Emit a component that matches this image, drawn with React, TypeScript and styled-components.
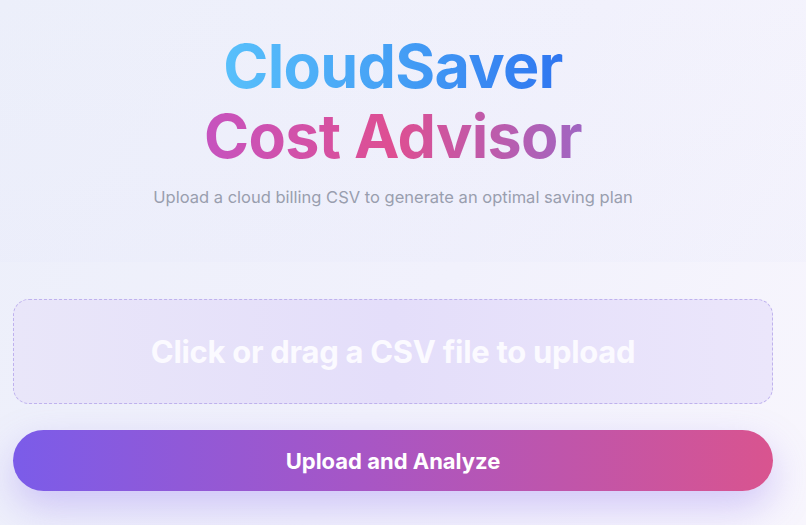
import React from "react";
import styled, { createGlobalStyle } from "styled-components";

const GlobalStyle = createGlobalStyle`
  html, body {
    margin: 0;
    padding: 0;
  }
  body {
    min-height: 525px;
    font-family: "Inter", "Noto Sans", sans-serif;
    background: linear-gradient(120deg, #eceffa 0%, #f1f1fc 55%, #f8f6fd 100%);
    -webkit-font-smoothing: antialiased;
  }
`;

const Page = styled.main`
  box-sizing: border-box;
  width: 806px;
  height: 525px;
  overflow: hidden;
  padding: 0 33px 0 13px;
  display: flex;
  flex-direction: column;
`;

const Header = styled.header`
  display: flex;
  flex-direction: column;
  align-items: center;
  padding: 31px 33px 0 13px;
  height: 262px;
  box-sizing: border-box;
  margin: 0 -33px 0 -13px;
  background: linear-gradient(180deg, rgba(255, 255, 255, 0) 0%, rgba(228, 230, 250, 0.18) 100%);
`;

const Title = styled.h1`
  margin: 0;
  font-size: 61px;
  line-height: 70px;
  font-weight: 700;
  letter-spacing: -0.7px;
  text-align: center;
  display: flex;
  flex-direction: column;
  align-items: center;
`;

const TitleLine = styled.span<{ $from: string; $mid: string; $to: string }>`
  background: linear-gradient(90deg, ${(p) => p.$from} 0%, ${(p) => p.$mid} 50%, ${(p) => p.$to} 100%);
  -webkit-background-clip: text;
  background-clip: text;
  color: transparent;
`;

const Subtitle = styled.p`
  margin: 14px 0 0;
  font-size: 16.5px;
  line-height: 24px;
  color: #999eae;
  font-weight: 400;
`;

const Form = styled.section`
  display: flex;
  flex-direction: column;
  gap: 26px;
  margin-top: 37px;
`;

const DropZone = styled.label`
  box-sizing: border-box;
  height: 105px;
  border: 1.5px dashed #bfb2ee;
  border-radius: 16px;
  background: linear-gradient(90deg, #e9e6f9 0%, #e4defa 50%, #ebe6fb 100%);
  display: flex;
  align-items: center;
  justify-content: center;
  cursor: pointer;
`;

const DropText = styled.span`
  font-size: 31px;
  font-weight: 700;
  color: #fbfaff;
  letter-spacing: -0.3px;
`;

const SubmitButton = styled.button`
  height: 61px;
  border: none;
  border-radius: 31px;
  background: linear-gradient(90deg, #7b5ce9 0%, #a656c6 45%, #d9548f 100%);
  color: #ffffff;
  font-family: "Inter", "Noto Sans", sans-serif;
  font-size: 22px;
  font-weight: 700;
  box-shadow: 0 16px 38px rgba(140, 110, 240, 0.34);
  cursor: pointer;
`;

export default function App() {
  return (
    <>
      <GlobalStyle />
      <Page>
        <Header>
          <Title>
            <TitleLine $from="#58c0fb" $mid="#45a0f5" $to="#2f76f0">
              CloudSaver
            </TitleLine>
            <TitleLine $from="#c653bf" $mid="#de4f92" $to="#a066c2">
              Cost Advisor
            </TitleLine>
          </Title>
          <Subtitle>Upload a cloud billing CSV to generate an optimal saving plan</Subtitle>
        </Header>
        <Form>
          <DropZone>
            <DropText>Click or drag a CSV file to upload</DropText>
          </DropZone>
          <SubmitButton type="button">Upload and Analyze</SubmitButton>
        </Form>
      </Page>
    </>
  );
}
